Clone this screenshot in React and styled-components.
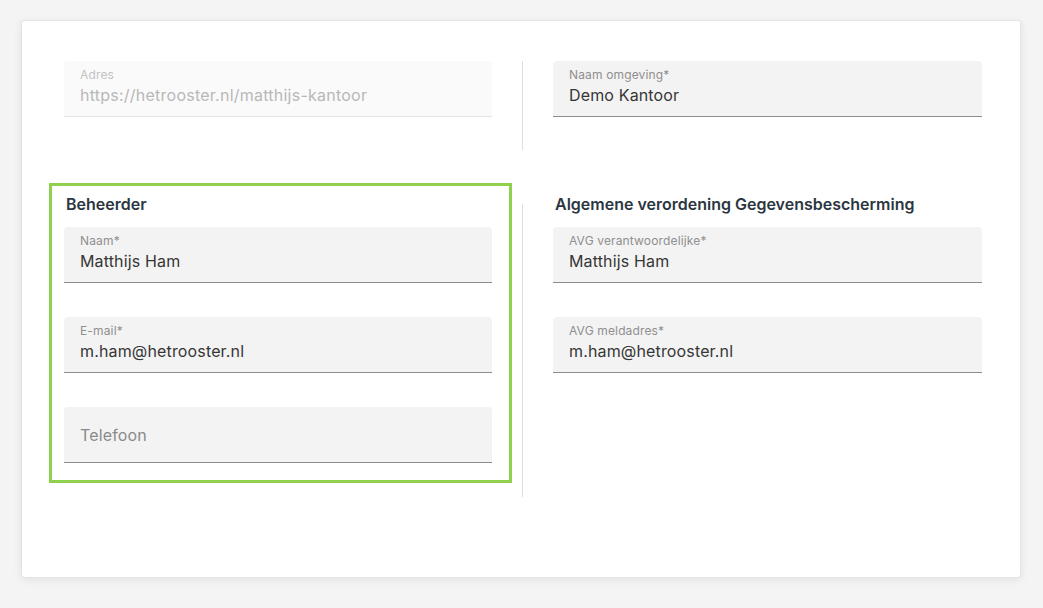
import React from "react";
import styled, { createGlobalStyle, css } from "styled-components";

const Global = createGlobalStyle`
  html, body { margin: 0; padding: 0; background: #f4f4f4; }
  body { font-family: Inter, "Noto Sans", Arial, sans-serif; }
  * { box-sizing: border-box; }
`;

const Page = styled.div`
  padding: 20px 22px 30px 21px;
`;

const Card = styled.div`
  background: #fff;
  border: 1px solid #e4e4e4;
  border-radius: 3px;
  box-shadow: 0 2px 8px rgba(0, 0, 0, 0.08);
  padding: 40px 37px 79px 42px;
  height: 558px;
`;

const Row = styled.div`
  display: grid;
  grid-template-columns: 428px 1px 429px;
  column-gap: 30px;
  align-items: start;
  margin-top: ${(p) => p.$top || 0}px;
`;

const Divider = styled.div`
  width: 1px;
  background: #dedede;
  height: ${(p) => p.$height}px;
  margin-top: ${(p) => p.$offset || 0}px;
`;

const Section = styled.section`
  display: flex;
  flex-direction: column;
  gap: 34px;
  ${(p) =>
    p.$highlighted &&
    css`
      border: 3px solid #8fd14f;
      margin: -11px -20px -20px -15px;
      padding: 8px 17px 17px 12px;
    `}
`;

const Heading = styled.h3`
  margin: 0 0 -21px 2px;
  font-size: 16px;
  line-height: 20px;
  font-weight: 600;
  color: #2b3641;
`;

const Field = styled.div`
  height: 56px;
  border-radius: 4px 4px 0 0;
  background: ${(p) => (p.$disabled ? "#fafafa" : "#f3f3f3")};
  border-bottom: 1px solid ${(p) => (p.$disabled ? "#e3e3e3" : "#8c8c8c")};
  padding: 7px 16px 0;
  display: flex;
  flex-direction: column;
  justify-content: ${(p) => (p.$empty ? "center" : "flex-start")};
  letter-spacing: 0.15px;
  ${(p) => p.$empty && css`padding-top: 0;`}
`;

const Label = styled.div`
  font-size: 12px;
  line-height: 14px;
  color: ${(p) => (p.$disabled ? "#c2c2c2" : "#8f8f8f")};
`;

const Value = styled.div`
  font-size: 16px;
  line-height: 20px;
  margin-top: 3px;
  color: ${(p) => (p.$disabled ? "#b8b8b8" : "#363636")};
  letter-spacing: ${(p) => (p.$disabled ? "0.24px" : "0.15px")};
`;

const Placeholder = styled.div`
  font-size: 16px;
  line-height: 20px;
  color: #8a8a8a;
`;

function TextField({ label, value, disabled, placeholder }) {
  if (placeholder) {
    return (
      <Field $empty>
        <Placeholder>{placeholder}</Placeholder>
      </Field>
    );
  }
  return (
    <Field $disabled={disabled}>
      <Label $disabled={disabled}>{label}</Label>
      <Value $disabled={disabled}>{value}</Value>
    </Field>
  );
}

export default function App() {
  return (
    <>
      <Global />
      <Page>
        <Card>
          <Row>
            <TextField label="Adres" value="https://hetrooster.nl/matthijs-kantoor" disabled />
            <Divider $height={89} />
            <TextField label="Naam omgeving*" value="Demo Kantoor" />
          </Row>
          <Row $top={44}>
            <Section $highlighted>
              <Heading>Beheerder</Heading>
              <TextField label="Naam*" value="Matthijs Ham" />
              <TextField label="E-mail*" value="m.ham@hetrooster.nl" />
              <TextField placeholder="Telefoon" />
            </Section>
            <Divider $height={293} $offset={10} />
            <Section>
              <Heading>Algemene verordening Gegevensbescherming</Heading>
              <TextField label="AVG verantwoordelijke*" value="Matthijs Ham" />
              <TextField label="AVG meldadres*" value="m.ham@hetrooster.nl" />
            </Section>
          </Row>
        </Card>
      </Page>
    </>
  );
}
